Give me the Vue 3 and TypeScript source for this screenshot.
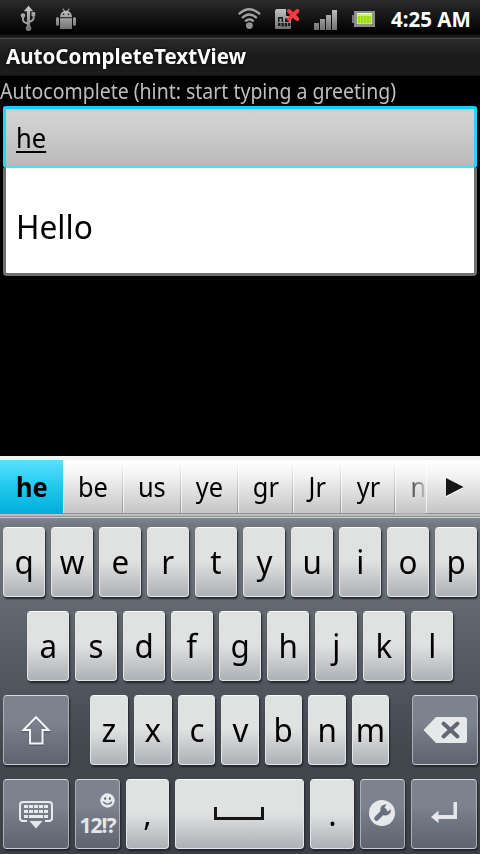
<script setup lang="ts">
interface Suggestion { text: string; width: number }
interface LetterKey { label: string; width: number }

const suggestions: Suggestion[] = [
  { text: 'he', width: 63 },
  { text: 'be', width: 60 },
  { text: 'us', width: 58 },
  { text: 'ye', width: 57 },
  { text: 'gr', width: 55 },
  { text: 'Jr', width: 48 },
  { text: 'yr', width: 54 },
]
const topRow: string[] = 'qwertyuiop'.split('')
const homeRow: string[] = 'asdfghjkl'.split('')
const lowRow: LetterKey[] = [
  { label: 'z', width: 38 },
  { label: 'x', width: 38 },
  { label: 'c', width: 37 },
  { label: 'v', width: 38 },
  { label: 'b', width: 37 },
  { label: 'n', width: 38 },
  { label: 'm', width: 37 },
]
</script>

<template>
  <div class="screen">
    <header class="status">
      <svg class="left-icons" width="90" height="38" viewBox="0 0 90 38">
        <defs>
          <linearGradient id="metal" x1="0" y1="6" x2="0" y2="31" gradientUnits="userSpaceOnUse">
            <stop offset="0" stop-color="#cdcdcd" />
            <stop offset="1" stop-color="#6c6c6c" />
          </linearGradient>
        </defs>
        <g fill="url(#metal)" stroke="none">
          <path d="M28.500 5.800l4.800 5.400h-3.200v15h-3.200v-15h-3.200z" />
          <circle cx="28.500" cy="28.200" r="2.800" />
          <circle cx="23" cy="15.600" r="2.300" />
          <path d="M31.500 12.200h3.700v3.800h-3.700z" />
        </g>
        <path d="M23 16v3.500q0 3.200 5.200 4M33.600 14v4q0 3-5 3.800" fill="none" stroke="#9f9f9f" stroke-width="2" />
        <g fill="url(#metal)">
          <path d="M60 17.300q.2-5 4-6.300L62.400 9l.8-.4 1.700 2.100h2.300l1.700-2.100.8.400-1.600 2q3.700 1.300 3.900 6.300z" />
          <rect x="60" y="18.200" width="12" height="10.800" />
          <rect x="56" y="17.200" width="3" height="8.600" rx="1.300" />
          <rect x="73" y="17.200" width="3" height="8.600" rx="1.300" />
        </g>
        <circle cx="63.500" cy="14.200" r=".8" fill="#111" />
        <circle cx="68.500" cy="14.200" r=".8" fill="#111" />
      </svg>
      <svg class="right-icons" width="145" height="38" viewBox="235 0 145 38">
        <g fill="none" stroke="#a4a4a4" stroke-width="2.300">
          <path d="M238.800 14.200q10.600-9.800 21.200 0" />
          <path d="M242 18q7.400-7 14.800 0" />
          <path d="M245.200 21.400q4.200-4 8.400 0" />
        </g>
        <circle cx="249.400" cy="25.600" r="3.400" fill="#929292" />
        <path d="M276.500 9H286v7h5v11.500q0 1.500-1.500 1.500H275V10.500z" fill="url(#metal)" />
        <path d="M278 17h5v5h-5zM285 18.500h4v3.500h-4zM278 23h2.500v3H278zM281.500 23h2.300v3.500h-2.300zM284.800 23h2.300v3.500h-2.300zM288.100 23h2.300v3h-2.300z" fill="#1b1b1b" />
        <path d="M279.500 18.500h2v3.500h-2z" fill="#999" />
        <path d="M289 11l8.300 8M297.300 11l-8.300 8" stroke="#f93a3f" stroke-width="4" stroke-linecap="round" />
        <g fill="url(#metal)">
          <rect x="314" y="23" width="5" height="7" />
          <rect x="320" y="19" width="5" height="11" />
          <rect x="326" y="15" width="5" height="15" />
          <rect x="332" y="10" width="5" height="20" />
        </g>
        <rect x="352" y="15" width="3" height="8" fill="#777" />
        <rect x="354" y="11" width="21" height="16" fill="#8d8d8d" />
        <rect x="356" y="13" width="17" height="12" fill="#333" />
        <rect x="356.500" y="13" width="16" height="11.500" fill="#effbd0" />
        <rect x="357.500" y="14" width="14" height="9.500" fill="#9bdc12" />
        <path d="M360.500 14v9.500M363.500 14v9.500M366.500 14v9.500M369.500 14v9.500" stroke="#b3e93c" stroke-width="1" />
        <path d="M357.500 14h14v2h-14z" fill="#caf26c" />
      </svg>
      <span class="time"><b>4:25 AM</b></span>
    </header>
    <div class="title"><b>AutoCompleteTextView</b></div>
    <div class="hint"><span>Autocomplete (hint: start typing a greeting)</span></div>
    <div class="field"><span>he</span></div>
    <div class="dropdown"><span>Hello</span></div>

    <section class="keyboard">
      <div class="candidates">
        <div v-for="(s, i) in suggestions" :key="s.text" class="cand" :class="{ active: i === 0 }" :style="{ width: s.width + 'px' }">
          <span>{{ s.text }}</span>
        </div>
        <div class="cand partial"><span>n</span></div>
        <div class="cand more">
          <svg width="54" height="54" viewBox="0 0 54 54">
            <path d="M20 18l17.500 9L20 36.500z" fill="#fff" transform="translate(0 1)" />
            <path d="M20 18l17.500 9L20 36z" fill="#151515" />
          </svg>
        </div>
      </div>
      <div class="ledge"></div>
      <div class="keys">
        <div class="row">
          <div v-for="k in topRow" :key="k" class="key letter"><span>{{ k }}</span></div>
        </div>
        <div class="row home">
          <div v-for="k in homeRow" :key="k" class="key letter"><span>{{ k }}</span></div>
        </div>
        <div class="row low">
          <div class="key dark wide">
            <svg width="66" height="70" viewBox="0 0 66 70">
              <path d="M33 22L20 35.500h6.500V49h13V35.500H46z" fill="none" stroke="#424a57" stroke-width="2" transform="translate(0 1)" opacity=".5" />
              <path d="M33 22.200L20.500 35H27v13.600h12.500V35h6z" fill="none" stroke="#f4f4f5" stroke-width="2" />
            </svg>
          </div>
          <div class="letters">
            <div v-for="k in lowRow" :key="k.label" class="key" :style="{ width: k.width + 'px' }"><span>{{ k.label }}</span></div>
          </div>
          <div class="key dark wide">
            <svg width="66" height="70" viewBox="0 0 66 70">
              <path d="M11.500 35L24 22h28q3 0 3 3v21q0 2-3 2H24z" fill="#e7e8ea" />
              <path d="M31.500 28.500l14 13M45.500 28.500l-14 13" stroke="#606874" stroke-width="4" stroke-linecap="round" />
            </svg>
          </div>
        </div>
        <div class="row bottom">
          <div class="key dark wide">
            <svg width="66" height="70" viewBox="0 0 66 70">
              <path d="M24 42h-4q-3 0-3-3V26q0-3 3-3h26q3 0 3 3v13q0 3-3 3h-4" fill="none" stroke="#e9eaed" stroke-width="2" />
              <path d="M26.500 42h13L33 49.500z" fill="#e5e6e9" />
              <g fill="#e9eaed">
                <path d="M21 26h4v3h-4zM26 26h4v3h-4zM31 26h4v3h-4zM36 26h4v3h-4zM41 26h4v3h-4z" />
                <path d="M21 31h4v3h-4zM26 31h4v3h-4zM31 31h4v3h-4zM36 31h4v3h-4zM41 31h4v3h-4z" />
                <path d="M21 36h4v3h-4zM26 36h14v3H26zM41 36h4v3h-4z" />
              </g>
            </svg>
          </div>
          <div class="key dark symbols">
            <svg width="15" height="15" viewBox="0 0 15 15">
              <circle cx="7.500" cy="7.500" r="7.200" fill="#e9eaec" />
              <ellipse cx="5.200" cy="5.500" rx="1" ry="1.500" fill="#606874" />
              <ellipse cx="9.800" cy="5.500" rx="1" ry="1.500" fill="#606874" />
              <path d="M3.200 8.800q4.300 4.800 8.600 0" fill="none" stroke="#606874" stroke-width="1.300" />
            </svg>
            <b>12!?</b>
          </div>
          <div class="key comma"><span>,</span></div>
          <div class="key space">
            <svg width="129" height="70" viewBox="0 0 129 70">
              <path d="M40.500 28v11.500h47V28" fill="none" stroke="#171513" stroke-width="3" />
            </svg>
          </div>
          <div class="key period"><span>.</span></div>
          <div class="key dark tools">
            <svg width="45" height="70" viewBox="0 0 45 70">
              <circle cx="22" cy="34" r="13" fill="#e7e8ea" />
              <path d="M16.500 39.500l8-8" stroke="#687080" stroke-width="4.600" stroke-linecap="round" />
              <path d="M26.500 25.300q-6 .2-6.200 5.200.7 6.500 5.700 6 5-.7 5-6.200l-3.300 2.200-3.500-3.200z" fill="#687080" />
            </svg>
          </div>
          <div class="key dark wide">
            <svg width="66" height="70" viewBox="0 0 66 70">
              <path d="M42.500 23H46v17H27.500v4L20 38l7.500-6.500V36h15z" fill="#e6e7ea" />
            </svg>
          </div>
        </div>
      </div>
    </section>
  </div>
</template>

<style>
html, body { margin: 0; background: #000; }
</style>

<style scoped>
.screen {
  width: 480px;
  height: 854px;
  display: flex;
  flex-direction: column;
  overflow: hidden;
  background: #000;
  font-family: "Noto Sans", "Open Sans", sans-serif;
  color: #000;
}
.screen * { box-sizing: border-box; }
svg { display: block; flex: none; }
.status {
  height: 38px;
  flex: none;
  display: flex;
  background: linear-gradient(#2b2b2b, #000 88%, #111 92%, #272727);
}
.right-icons { margin-left: 145px; }
.time { margin-left: 11px; color: #fff; font-size: 20.500px; line-height: 39px; white-space: nowrap; }
.title {
  height: 38px;
  flex: none;
  padding-left: 6px;
  border-top: 1px solid #484848;
  border-bottom: 1px solid #111;
  background: linear-gradient(#2b2b2b, #1c1c1c 46%, #1b1b1b 48%, #1b1b1b);
  color: #fff;
  font-size: 21px;
  line-height: 34px;
  text-shadow: 0 0 3px #000;
}
.title b, .hint span, .dropdown span { display: inline-block; transform-origin: left; }
.title b { transform: scaleX(.979); }
.hint { height: 30px; flex: none; color: #bebebe; font-size: 21.500px; line-height: 29px; white-space: nowrap; }
.hint span { transform: scaleX(.906); }
.field {
  width: 474px;
  height: 62px;
  flex: none;
  margin-left: 3px;
  padding-left: 10px;
  border: 3px solid #0cd2fe;
  border-bottom: 2px solid #52dcfb;
  border-left-color: #27d5fc;
  border-right-color: #27d5fc;
  border-radius: 3px;
  background: linear-gradient(#c5c5c5, #d3d3d3 5%, #cfcfcf 30%, #b9b9b9);
  font-size: 27px;
  line-height: 58px;
}
.field span {
  display: inline-block;
  transform: scaleX(.945);
  transform-origin: left;
  text-decoration: underline;
  text-decoration-thickness: 1.500px;
  text-underline-offset: 3px;
}
.dropdown {
  width: 474px;
  height: 108px;
  flex: none;
  margin-left: 3px;
  padding-left: 10px;
  border: 3px solid #707070;
  border-top: 0;
  border-radius: 0 0 4px 4px;
  background: #fff;
  font-size: 33px;
  line-height: 117px;
}
.dropdown span { transform: scaleX(.96); }
.keyboard { margin-top: auto; flex: none; height: 398px; border-top: 4px solid #f3f3f3; }
.candidates { display: flex; height: 54px; background: linear-gradient(#fff, #f2f2f2 30%, #c4c4c4); }
.cand {
  position: relative;
  flex: none;
  height: 54px;
  border-bottom: 1px solid #919191;
  text-align: center;
  font-size: 27px;
  line-height: 53px;
}
.cand span { display: inline-block; transform: scaleX(.94); }
.cand::before { content: ""; position: absolute; left: 0; top: 3px; bottom: 0; width: 1px; background: linear-gradient(#fff, #eee); }
.cand::after { content: ""; position: absolute; right: 0; top: 3px; bottom: 0; width: 1px; background: linear-gradient(#f6f6f6, #929292); }
.cand.active { border: 0; background: linear-gradient(#59e1ff, #20c8ed 50%, #00addb); font-weight: 700; }
.cand.active::before, .cand.active::after { display: none; }
.cand.partial { width: 31px; overflow: hidden; padding-left: 15px; border-bottom-color: #aaa; text-align: left; }
.partial span { background: linear-gradient(90deg, #444, #bbb 15px); background-clip: text; color: transparent; }
.cand.partial::after, .cand.more::after { display: none; }
.cand.more { width: 54px; }
.ledge { height: 4px; background: linear-gradient(#bdbdbd 0 60%, #8f8f8f 60% 80%, #d0d0d0 80%); }
.keys {
  height: 336px;
  padding: 9px 0 0 3px;
  background: linear-gradient(#7d858e 0, #6f767f 8px, #666c76 70px, #51565f 165px, #43484f 230px, #3c4148);
}
.row { display: flex; height: 70px; gap: 6px; margin-bottom: 14px; }
.home { padding-left: 24px; }
.low { gap: 21px; }
.letters { display: flex; gap: 6px; width: 301px; }
.key {
  height: 70px;
  flex: none;
  border: 1px solid #e4e5e6;
  border-top-color: #fbfbfb;
  border-radius: 4px;
  background: linear-gradient(#e0e2e1 0 48%, #dadbdc 55%, #b1b2b7 98%);
  box-shadow: 1px 2px 2px #22252a;
  text-align: center;
  font-size: 33px;
  line-height: 68px;
}
.key span { display: inline-block; transform: scaleX(.95); }
.letter { width: 42px; }
.wide { width: 66px; }
.dark { border-color: #aab0ba; border-top-color: #d7dae0; border-bottom-color: #c8cbd1; background: linear-gradient(#7c838f 0 40%, #747b87 52%, #5d6470); }
.dark svg, .space svg { margin: -1px; }
.symbols { width: 45px; padding-top: 13px; color: #e4e6e9; }
.dark.symbols svg { margin: 0 0 0 24px; }
.symbols b { display: block; font-size: 21px; line-height: 34px; letter-spacing: -1px; }
.comma { width: 43px; }
.space { width: 129px; }
.period { width: 44px; }
.tools { width: 45px; }
</style>
